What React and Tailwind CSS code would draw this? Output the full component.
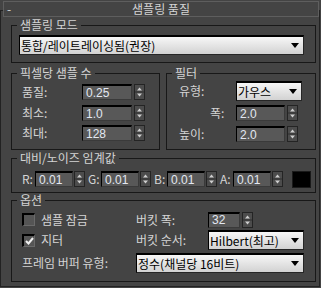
import React from "react";

const LBL = "text-[12px] leading-[14px] text-[#d4d4d4] whitespace-nowrap";

function Arrows() {
  return (
    <div className="w-[11px] h-[16px] border border-[#242424] bg-[#4c4c4c] flex items-center justify-center">
      <svg width="9" height="14" viewBox="0 0 9 14">
        <polygon points="2,5.5 4.5,2.5 7,5.5" fill="#cfcfcf" />
        <line x1="0" y1="7" x2="9" y2="7" stroke="#2e2e2e" strokeWidth="1" />
        <polygon points="2,8.5 7,8.5 4.5,11.5" fill="#cfcfcf" />
      </svg>
    </div>
  );
}

function Field({ w, value }) {
  return (
    <div
      className={`${w} h-[16px] bg-[#585858] border-t-2 border-l border-r border-b border-t-black border-l-black border-r-[#3a3a3a] border-b-[#3a3a3a] flex items-center pl-[3px] text-[12px] leading-[14px] text-[#e3e8f2] font-['Liberation_Sans',sans-serif]`}
    >
      {value}
    </div>
  );
}

function Spin({ w, value, gap }) {
  return (
    <div className={`flex items-center ${gap || "gap-[2px]"}`}>
      <Field w={w} value={value} />
      <Arrows />
    </div>
  );
}

function Drop({ w, children }) {
  return (
    <div
      className={`${w} h-[20px] border-t-2 border-l border-r border-b border-t-black border-l-black border-r-[#262626] border-b-[#262626] bg-linear-to-b from-[#f7f7f7] to-[#d2d2d2] flex items-center justify-between pl-[1px] pr-[4px]`}
    >
      <span className="text-[12px] leading-[14px] text-black whitespace-nowrap">{children}</span>
      <svg width="8" height="5" viewBox="0 0 8 5">
        <polygon points="0,0 8,0 4,5" fill="#000" />
      </svg>
    </div>
  );
}

function Check({ checked }) {
  return (
    <div className="w-[13px] h-[13px] bg-[#555555] border-t-2 border-l-2 border-r border-b border-t-black border-l-black border-r-[#6a6a6a] border-b-[#6a6a6a] flex items-center justify-center">
      {checked && (
        <svg width="9" height="8" viewBox="0 0 9 8">
          <polyline points="1,4 3.5,6.5 8,1" fill="none" stroke="#f0f0f0" strokeWidth="2" />
        </svg>
      )}
    </div>
  );
}

function Group({ label, className, children }) {
  return (
    <div className={`border border-[#181818] flex flex-col ${className}`}>
      <div className={`-mt-[8px] ml-[5px] px-[3px] w-fit h-[14px] bg-[#444444] ${LBL}`}>{label}</div>
      {children}
    </div>
  );
}

export default function App() {
  return (
    <div className="w-[321px] h-[288px] bg-[#444444] overflow-hidden font-['Noto_Sans_CJK_KR','Noto_Sans',sans-serif]">
      <div className="mt-[10px] w-[320px] h-[277px] border border-[#222222] flex flex-col">
        {/* title bar */}
        <div className="-mt-[10px] ml-[2px] w-[316px] h-[16px] border border-[#5e5e5e] bg-[#444444] flex items-center relative">
          <span className={`pl-[3px] ${LBL}`}>-</span>
          <span className={`absolute left-0 right-0 text-center ${LBL}`}>샘플링 품질</span>
        </div>

        {/* sampling mode */}
        <Group label="샘플링 모드" className="mt-[8px] ml-[10px] w-[305px] h-[38px]">
          <div className="mt-[3px] pl-[7px]">
            <Drop w="w-[285px]">통합/레이트레이싱됨(권장)</Drop>
          </div>
        </Group>

        <div className="mt-[10px] ml-[10px] w-[305px] flex gap-[6px]">
          <Group label="픽셀당 샘플 수" className="w-[149px] h-[77px]">
            <div className="mt-[4px] pl-[10px] flex flex-col">
              <div className="flex items-center h-[16px]">
                <span className={`w-[60px] ${LBL}`}>품질:</span>
                <Spin w="w-[50px]" value="0.25" />
              </div>
              <div className="flex items-center h-[16px] mt-[5px]">
                <span className={`w-[60px] ${LBL}`}>최소:</span>
                <Spin w="w-[50px]" value="1.0" />
              </div>
              <div className="flex items-center h-[16px] mt-[4px]">
                <span className={`w-[60px] ${LBL}`}>최대:</span>
                <Spin w="w-[50px]" value="128" />
              </div>
            </div>
          </Group>
          <Group label="필터" className="w-[150px] h-[77px]">
            <div className="mt-[1px] pl-[12px] flex flex-col">
              <div className="flex items-center h-[20px]">
                <span className={`w-[57px] ${LBL}`}>유형:</span>
                <Drop w="w-[66px]">가우스</Drop>
              </div>
              <div className="flex items-center h-[16px] mt-[4px]">
                <span className={`w-[57px] pl-[31px] ${LBL}`}>폭:</span>
                <Spin w="w-[49px]" value="2.0" />
              </div>
              <div className="flex items-center h-[16px] mt-[5px]">
                <span className={`w-[57px] ${LBL}`}>높이:</span>
                <Spin w="w-[49px]" value="2.0" />
              </div>
            </div>
          </Group>
        </div>

        {/* contrast */}
        <Group label="대비/노이즈 임계값" className="mt-[8px] ml-[10px] w-[305px] h-[35px]">
          <div className="mt-[6px] pl-[10px] flex items-start">
            {["R:", "G:", "B:", "A:"].map((l) => (
              <div key={l} className="flex items-center h-[16px] mr-[3px]">
                <span className={`w-[13px] ${LBL}`}>{l}</span>
                <Spin w="w-[38px]" value="0.01" gap="gap-[1px]" />
              </div>
            ))}
            <div className="ml-[6px] w-[19px] h-[17px] bg-black border border-[#1a1a1a]" />
          </div>
        </Group>

        {/* options */}
        <Group label="옵션" className="mt-[7px] ml-[10px] w-[305px] h-[82px]">
          <div className="mt-[4px] pl-[10px] flex flex-col">
            <div className="flex items-center h-[17px]">
              <div className="w-[114px] flex items-center gap-[6px]">
                <Check />
                <span className={LBL}>샘플 잠금</span>
              </div>
              <span className={`w-[72px] ${LBL}`}>버킷 폭:</span>
              <Spin w="w-[32px]" value="32" />
            </div>
            <div className="flex items-center h-[20px] mt-[2px]">
              <div className="w-[114px] flex items-center gap-[6px]">
                <Check checked />
                <span className={LBL}>지터</span>
              </div>
              <span className={`w-[72px] ${LBL}`}>버킷 순서:</span>
              <Drop w="w-[96px]">Hilbert(최고)</Drop>
            </div>
            <div className="flex items-center h-[20px] mt-[3px]">
              <span className={`w-[114px] ${LBL}`}>프레임 버퍼 유형:</span>
              <Drop w="w-[168px]">정수(채널당 16비트)</Drop>
            </div>
          </div>
        </Group>
      </div>
    </div>
  );
}
